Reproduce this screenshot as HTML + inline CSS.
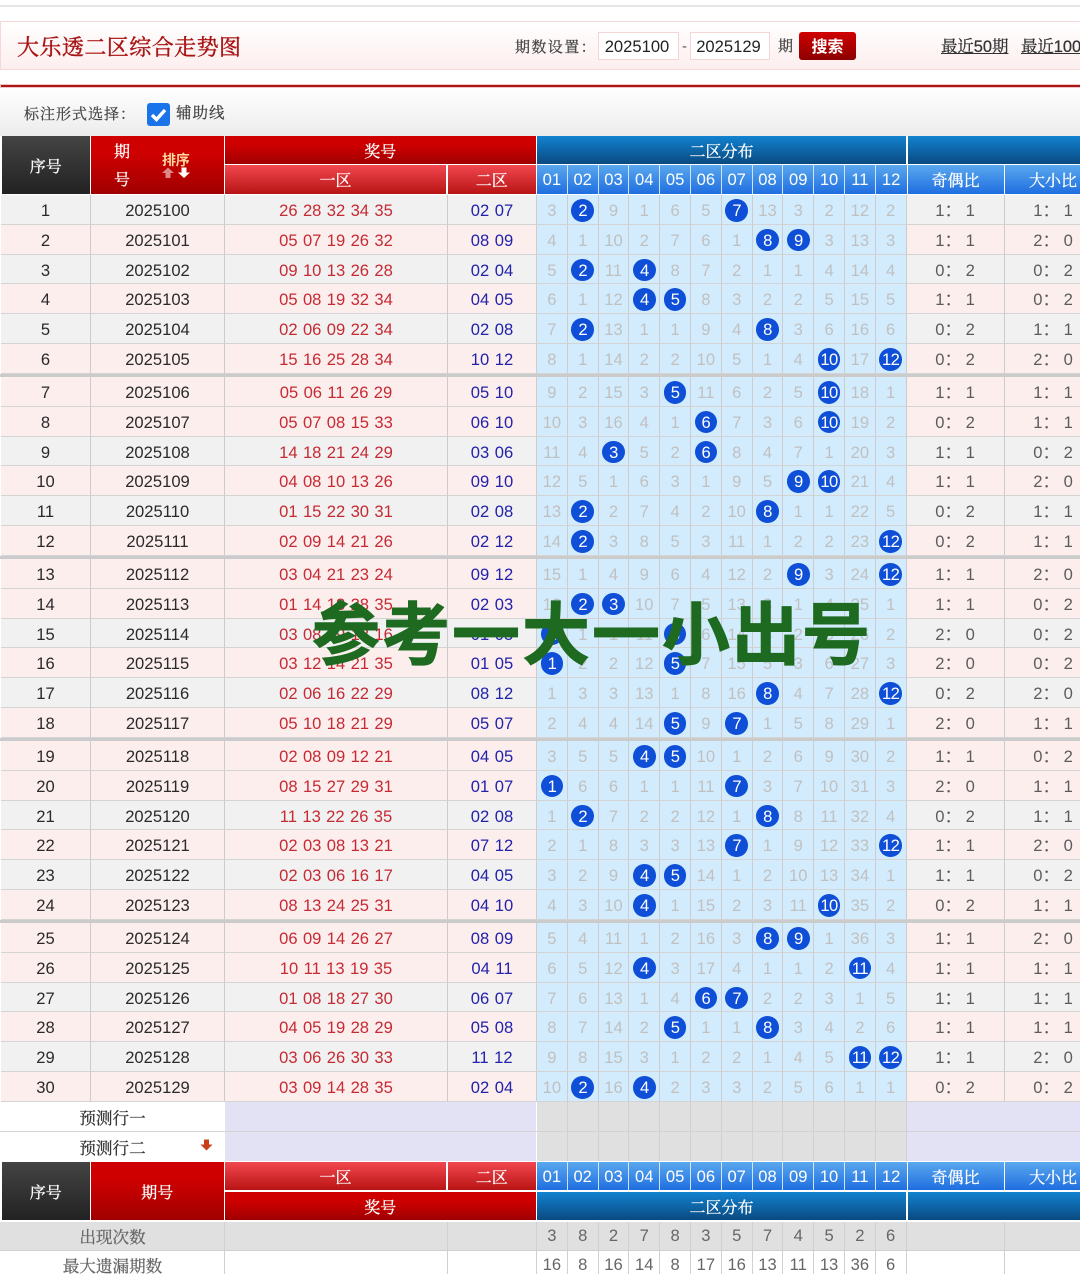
<!DOCTYPE html>
<html lang="zh">
<head>
<meta charset="utf-8">
<title>大乐透二区综合走势图</title>
<style>
html{margin:0;padding:0;background:#fff;width:1080px;height:1274px;overflow:hidden}
body{margin:0;padding:0;background:#fff;width:1080px;height:1274px;position:relative;overflow:hidden;font-family:"Liberation Sans","Noto Sans CJK SC",sans-serif;color:#222}
.a{position:absolute;display:block}
.se{font-family:"Liberation Sans","Noto Serif CJK SC",serif;-webkit-text-stroke:.25px currentColor}
.c{display:flex;align-items:center;justify-content:center;text-align:center;box-sizing:border-box}
.r{position:absolute;left:1px;height:29.8px;display:flex;width:1110px;font-size:16.6px;line-height:31px;background:#f1f1f1;color:#2a2a2a}
.r.p{background:#fdeeee}
.r span,.r i{display:block;box-sizing:border-box;border-right:1.2px solid #ccc;border-bottom:1.2px solid #d4d4d4;text-align:center;font-style:normal;height:100%}
.r span:nth-child(1){width:90px}
.r span:nth-child(2){width:134px}
.r span:nth-child(3){width:223px;color:#c62a33;word-spacing:.75px}
.r span:nth-child(4){width:89px;color:#2222aa;word-spacing:1px}
.r span:nth-child(n+5){width:98px;color:#5c5c5c}
.r i{width:30.8px;background:#d2ecfd;color:#c0c0c0;position:relative}
.r i b{position:absolute;left:3.6px;top:4px;width:22.6px;height:22.6px;border-radius:50%;background:#0f4fd8;color:#fff;font-weight:normal;line-height:23.6px;letter-spacing:-.6px}
.s{position:absolute;left:0;width:1080px;height:3.2px;background:#cbcbcb}
.hs{background:linear-gradient(#444,#222)}
.hr{background:linear-gradient(#cf0000 30%,#a00000)}
.hl{background:linear-gradient(#f2474f,#b81414)}
.hb{background:linear-gradient(#1282d0,#0a4a80)}
.hu{background:linear-gradient(#5aa8ee,#1f6ee0)}
.w{color:#fff;font-size:16px;font-family:"Liberation Sans","Noto Serif CJK SC",serif;-webkit-text-stroke:.3px #fff}
.f{position:absolute;left:537px;display:flex}
.f i{display:block;box-sizing:border-box;width:30.8px;height:100%;border-right:1.2px solid #d0d0d0;font-style:normal;text-align:center}
</style>
</head>
<body>
<!-- top -->
<div class="a" style="left:0;top:5px;width:1080px;height:1.5px;background:#e5e5e5"></div>

<!-- title bar -->
<div class="a" style="left:0;top:21px;width:1090px;height:49px;box-sizing:border-box;border:1.4px solid #f6d8d8;background:linear-gradient(#fff,#fdeeee)"></div>
<div class="a se" style="left:17px;top:32px;font-size:22px;line-height:32px;letter-spacing:.45px;color:#a81414;white-space:nowrap;-webkit-text-stroke:.4px #a81414">大乐透二区综合走势图</div>
<div class="a se" style="left:515px;top:38px;font-size:15px;line-height:20px;letter-spacing:1.4px;color:#444;white-space:nowrap">期数设置：</div>
<div class="a c" style="left:598px;top:32px;width:81px;height:28px;border:1.4px solid #f5d5d5;background:#fff;font-size:16.6px;color:#222;padding-right:3px;padding-top:1px">2025100</div>
<div class="a" style="left:682px;top:37px;font-size:15px;line-height:20px;color:#555">-</div>
<div class="a c" style="left:690px;top:32px;width:80px;height:28px;border:1.4px solid #f5d5d5;background:#fff;font-size:16.6px;color:#222;padding-right:3px;padding-top:1px">2025129</div>
<div class="a se" style="left:778px;top:37px;font-size:15px;line-height:20px;color:#444">期</div>
<div class="a c" style="left:799px;top:32px;width:57px;height:28px;border-radius:3px;background:linear-gradient(#d00000,#8c0000);color:#fff;font-size:16px;font-weight:bold;padding-bottom:2px">搜索</div>
<div class="a se" style="left:941px;top:37px;font-size:16.4px;line-height:20px;color:#333;text-decoration:underline;white-space:nowrap">最近50期</div>
<div class="a se" style="left:1021px;top:37px;font-size:16.4px;line-height:20px;color:#333;text-decoration:underline;white-space:nowrap">最近100期</div>

<!-- red line -->
<div class="a" style="left:0;top:84px;width:1080px;height:4px;background:#f3c4c4"></div>
<div class="a" style="left:1px;top:85px;width:1079px;height:2px;background:#a81a1a"></div>

<!-- options -->
<div class="a" style="left:0;top:88px;width:1080px;height:48px;background:linear-gradient(#fff,#ececec)"></div>
<div class="a se" style="left:24px;top:105px;font-size:15px;line-height:20px;letter-spacing:1px;color:#444;white-space:nowrap">标注形式选择：</div>
<div class="a" style="left:147px;top:103px;width:23px;height:23px;border-radius:3px;background:#1a73e8">
<svg width="23" height="23" viewBox="0 0 23 23"><path d="M5 12l4.5 4.5L18 7" fill="none" stroke="#fff" stroke-width="3.4"/></svg></div>
<div class="a se" style="left:176px;top:104px;font-size:15.5px;line-height:20px;letter-spacing:1px;color:#444;white-space:nowrap">辅助线</div>

<!-- header -->
<div class="a c hs w" style="left:2px;top:136px;width:87.5px;height:58px">序号</div>
<div class="a hr" style="left:91px;top:136px;width:132.5px;height:58px"></div>
<div class="a w" style="left:114px;top:143px;line-height:20px">期</div>
<div class="a w" style="left:114px;top:171px;line-height:20px">号</div>
<div class="a" style="left:162px;top:152px;font-size:14px;line-height:16px;font-weight:bold;color:#ffd9a0;letter-spacing:-.3px">排序</div>
<svg class="a" style="left:161px;top:167px" width="32" height="12" viewBox="0 0 32 12"><path d="M1 6L7 .5 13 6H9.5V11H4.5V6Z" fill="#d88"/><path d="M17 5.5H20.5V.5H25.5V5.5H29L23 11Z" fill="#fff"/></svg>
<div class="a c hr w" style="left:225px;top:136px;width:310.5px;height:28px">奖号</div>
<div class="a c hl w" style="left:225px;top:165px;width:221px;height:29px">一区</div>
<div class="a c hl w" style="left:448px;top:165px;width:87.5px;height:29px">二区</div>
<div class="a c hb w" style="left:537px;top:136px;width:369px;height:28px">二区分布</div>
<div class="a hb" style="left:907.5px;top:136px;width:173px;height:28px"></div>
<div class="a f hu" style="top:165px;height:29px;width:369.6px;color:#fff;font-size:16.6px;line-height:29px"><i style="border-color:#cfe4fa">01</i><i style="border-color:#cfe4fa">02</i><i style="border-color:#cfe4fa">03</i><i style="border-color:#cfe4fa">04</i><i style="border-color:#cfe4fa">05</i><i style="border-color:#cfe4fa">06</i><i style="border-color:#cfe4fa">07</i><i style="border-color:#cfe4fa">08</i><i style="border-color:#cfe4fa">09</i><i style="border-color:#cfe4fa">10</i><i style="border-color:#cfe4fa">11</i><i style="border:0">12</i></div>
<div class="a c hu w" style="left:907.5px;top:165px;width:96px;height:29px">奇偶比</div>
<div class="a c hu w" style="left:1005px;top:165px;width:96px;height:29px">大小比</div>

<!-- rows -->
<div class="r" style="top:195px"><span>1</span><span>2025100</span><span>26 28 32 34 35</span><span>02 07</span><i>3</i><i><b>2</b></i><i>9</i><i>1</i><i>6</i><i>5</i><i><b>7</b></i><i>13</i><i>3</i><i>2</i><i>12</i><i>2</i><span>1： 1</span><span>1： 1</span></div>
<div class="r p" style="top:224.8px"><span>2</span><span>2025101</span><span>05 07 19 26 32</span><span>08 09</span><i>4</i><i>1</i><i>10</i><i>2</i><i>7</i><i>6</i><i>1</i><i><b>8</b></i><i><b>9</b></i><i>3</i><i>13</i><i>3</i><span>1： 1</span><span>2： 0</span></div>
<div class="r" style="top:254.6px"><span>3</span><span>2025102</span><span>09 10 13 26 28</span><span>02 04</span><i>5</i><i><b>2</b></i><i>11</i><i><b>4</b></i><i>8</i><i>7</i><i>2</i><i>1</i><i>1</i><i>4</i><i>14</i><i>4</i><span>0： 2</span><span>0： 2</span></div>
<div class="r p" style="top:284.4px"><span>4</span><span>2025103</span><span>05 08 19 32 34</span><span>04 05</span><i>6</i><i>1</i><i>12</i><i><b>4</b></i><i><b>5</b></i><i>8</i><i>3</i><i>2</i><i>2</i><i>5</i><i>15</i><i>5</i><span>1： 1</span><span>0： 2</span></div>
<div class="r" style="top:314.2px"><span>5</span><span>2025104</span><span>02 06 09 22 34</span><span>02 08</span><i>7</i><i><b>2</b></i><i>13</i><i>1</i><i>1</i><i>9</i><i>4</i><i><b>8</b></i><i>3</i><i>6</i><i>16</i><i>6</i><span>0： 2</span><span>1： 1</span></div>
<div class="r p" style="top:344px"><span>6</span><span>2025105</span><span>15 16 25 28 34</span><span>10 12</span><i>8</i><i>1</i><i>14</i><i>2</i><i>2</i><i>10</i><i>5</i><i>1</i><i>4</i><i><b>10</b></i><i>17</i><i><b>12</b></i><span>0： 2</span><span>2： 0</span></div>
<div class="s" style="top:373.8px"></div>
<div class="r p" style="top:377px"><span>7</span><span>2025106</span><span>05 06 11 26 29</span><span>05 10</span><i>9</i><i>2</i><i>15</i><i>3</i><i><b>5</b></i><i>11</i><i>6</i><i>2</i><i>5</i><i><b>10</b></i><i>18</i><i>1</i><span>1： 1</span><span>1： 1</span></div>
<div class="r p" style="top:406.8px"><span>8</span><span>2025107</span><span>05 07 08 15 33</span><span>06 10</span><i>10</i><i>3</i><i>16</i><i>4</i><i>1</i><i><b>6</b></i><i>7</i><i>3</i><i>6</i><i><b>10</b></i><i>19</i><i>2</i><span>0： 2</span><span>1： 1</span></div>
<div class="r" style="top:436.6px"><span>9</span><span>2025108</span><span>14 18 21 24 29</span><span>03 06</span><i>11</i><i>4</i><i><b>3</b></i><i>5</i><i>2</i><i><b>6</b></i><i>8</i><i>4</i><i>7</i><i>1</i><i>20</i><i>3</i><span>1： 1</span><span>0： 2</span></div>
<div class="r p" style="top:466.4px"><span>10</span><span>2025109</span><span>04 08 10 13 26</span><span>09 10</span><i>12</i><i>5</i><i>1</i><i>6</i><i>3</i><i>1</i><i>9</i><i>5</i><i><b>9</b></i><i><b>10</b></i><i>21</i><i>4</i><span>1： 1</span><span>2： 0</span></div>
<div class="r" style="top:496.2px"><span>11</span><span>2025110</span><span>01 15 22 30 31</span><span>02 08</span><i>13</i><i><b>2</b></i><i>2</i><i>7</i><i>4</i><i>2</i><i>10</i><i><b>8</b></i><i>1</i><i>1</i><i>22</i><i>5</i><span>0： 2</span><span>1： 1</span></div>
<div class="r p" style="top:526px"><span>12</span><span>2025111</span><span>02 09 14 21 26</span><span>02 12</span><i>14</i><i><b>2</b></i><i>3</i><i>8</i><i>5</i><i>3</i><i>11</i><i>1</i><i>2</i><i>2</i><i>23</i><i><b>12</b></i><span>0： 2</span><span>1： 1</span></div>
<div class="s" style="top:555.8px"></div>
<div class="r p" style="top:559px"><span>13</span><span>2025112</span><span>03 04 21 23 24</span><span>09 12</span><i>15</i><i>1</i><i>4</i><i>9</i><i>6</i><i>4</i><i>12</i><i>2</i><i><b>9</b></i><i>3</i><i>24</i><i><b>12</b></i><span>1： 1</span><span>2： 0</span></div>
<div class="r p" style="top:588.8px"><span>14</span><span>2025113</span><span>01 14 18 28 35</span><span>02 03</span><i>16</i><i><b>2</b></i><i><b>3</b></i><i>10</i><i>7</i><i>5</i><i>13</i><i>3</i><i>1</i><i>4</i><i>25</i><i>1</i><span>1： 1</span><span>0： 2</span></div>
<div class="r" style="top:618.6px"><span>15</span><span>2025114</span><span>03 08 09 12 16</span><span>01 05</span><i><b>1</b></i><i>1</i><i>1</i><i>11</i><i><b>5</b></i><i>6</i><i>14</i><i>4</i><i>2</i><i>5</i><i>26</i><i>2</i><span>2： 0</span><span>0： 2</span></div>
<div class="r p" style="top:648.4px"><span>16</span><span>2025115</span><span>03 12 14 21 35</span><span>01 05</span><i><b>1</b></i><i>2</i><i>2</i><i>12</i><i><b>5</b></i><i>7</i><i>15</i><i>5</i><i>3</i><i>6</i><i>27</i><i>3</i><span>2： 0</span><span>0： 2</span></div>
<div class="r" style="top:678.2px"><span>17</span><span>2025116</span><span>02 06 16 22 29</span><span>08 12</span><i>1</i><i>3</i><i>3</i><i>13</i><i>1</i><i>8</i><i>16</i><i><b>8</b></i><i>4</i><i>7</i><i>28</i><i><b>12</b></i><span>0： 2</span><span>2： 0</span></div>
<div class="r p" style="top:708px"><span>18</span><span>2025117</span><span>05 10 18 21 29</span><span>05 07</span><i>2</i><i>4</i><i>4</i><i>14</i><i><b>5</b></i><i>9</i><i><b>7</b></i><i>1</i><i>5</i><i>8</i><i>29</i><i>1</i><span>2： 0</span><span>1： 1</span></div>
<div class="s" style="top:737.8px"></div>
<div class="r p" style="top:741px"><span>19</span><span>2025118</span><span>02 08 09 12 21</span><span>04 05</span><i>3</i><i>5</i><i>5</i><i><b>4</b></i><i><b>5</b></i><i>10</i><i>1</i><i>2</i><i>6</i><i>9</i><i>30</i><i>2</i><span>1： 1</span><span>0： 2</span></div>
<div class="r p" style="top:770.8px"><span>20</span><span>2025119</span><span>08 15 27 29 31</span><span>01 07</span><i><b>1</b></i><i>6</i><i>6</i><i>1</i><i>1</i><i>11</i><i><b>7</b></i><i>3</i><i>7</i><i>10</i><i>31</i><i>3</i><span>2： 0</span><span>1： 1</span></div>
<div class="r" style="top:800.6px"><span>21</span><span>2025120</span><span>11 13 22 26 35</span><span>02 08</span><i>1</i><i><b>2</b></i><i>7</i><i>2</i><i>2</i><i>12</i><i>1</i><i><b>8</b></i><i>8</i><i>11</i><i>32</i><i>4</i><span>0： 2</span><span>1： 1</span></div>
<div class="r p" style="top:830.4px"><span>22</span><span>2025121</span><span>02 03 08 13 21</span><span>07 12</span><i>2</i><i>1</i><i>8</i><i>3</i><i>3</i><i>13</i><i><b>7</b></i><i>1</i><i>9</i><i>12</i><i>33</i><i><b>12</b></i><span>1： 1</span><span>2： 0</span></div>
<div class="r" style="top:860.2px"><span>23</span><span>2025122</span><span>02 03 06 16 17</span><span>04 05</span><i>3</i><i>2</i><i>9</i><i><b>4</b></i><i><b>5</b></i><i>14</i><i>1</i><i>2</i><i>10</i><i>13</i><i>34</i><i>1</i><span>1： 1</span><span>0： 2</span></div>
<div class="r p" style="top:890px"><span>24</span><span>2025123</span><span>08 13 24 25 31</span><span>04 10</span><i>4</i><i>3</i><i>10</i><i><b>4</b></i><i>1</i><i>15</i><i>2</i><i>3</i><i>11</i><i><b>10</b></i><i>35</i><i>2</i><span>0： 2</span><span>1： 1</span></div>
<div class="s" style="top:919.8px"></div>
<div class="r p" style="top:923px"><span>25</span><span>2025124</span><span>06 09 14 26 27</span><span>08 09</span><i>5</i><i>4</i><i>11</i><i>1</i><i>2</i><i>16</i><i>3</i><i><b>8</b></i><i><b>9</b></i><i>1</i><i>36</i><i>3</i><span>1： 1</span><span>2： 0</span></div>
<div class="r p" style="top:952.8px"><span>26</span><span>2025125</span><span>10 11 13 19 35</span><span>04 11</span><i>6</i><i>5</i><i>12</i><i><b>4</b></i><i>3</i><i>17</i><i>4</i><i>1</i><i>1</i><i>2</i><i><b>11</b></i><i>4</i><span>1： 1</span><span>1： 1</span></div>
<div class="r" style="top:982.6px"><span>27</span><span>2025126</span><span>01 08 18 27 30</span><span>06 07</span><i>7</i><i>6</i><i>13</i><i>1</i><i>4</i><i><b>6</b></i><i><b>7</b></i><i>2</i><i>2</i><i>3</i><i>1</i><i>5</i><span>1： 1</span><span>1： 1</span></div>
<div class="r p" style="top:1012.4px"><span>28</span><span>2025127</span><span>04 05 19 28 29</span><span>05 08</span><i>8</i><i>7</i><i>14</i><i>2</i><i><b>5</b></i><i>1</i><i>1</i><i><b>8</b></i><i>3</i><i>4</i><i>2</i><i>6</i><span>1： 1</span><span>1： 1</span></div>
<div class="r" style="top:1042.2px"><span>29</span><span>2025128</span><span>03 06 26 30 33</span><span>11 12</span><i>9</i><i>8</i><i>15</i><i>3</i><i>1</i><i>2</i><i>2</i><i>1</i><i>4</i><i>5</i><i><b>11</b></i><i><b>12</b></i><span>1： 1</span><span>2： 0</span></div>
<div class="r p" style="top:1072px"><span>30</span><span>2025129</span><span>03 09 14 28 35</span><span>02 04</span><i>10</i><i><b>2</b></i><i>16</i><i><b>4</b></i><i>2</i><i>3</i><i>3</i><i>2</i><i>5</i><i>6</i><i>1</i><i>1</i><span>0： 2</span><span>0： 2</span></div>

<!-- prediction rows -->
<div class="a c se" style="left:0;top:1102px;width:225px;height:29px;font-size:16.6px;color:#333">预测行一</div>
<div class="a c se" style="left:0;top:1132px;width:225px;height:29px;font-size:16.6px;color:#333">预测行二</div>
<svg class="a" style="left:200px;top:1139px" width="13" height="12" viewBox="0 0 13 12"><path d="M.5 5.5H4V.5H9V5.5H12.5L6.5 11.5Z" fill="#c8401a"/></svg>
<div class="a" style="left:225px;top:1102px;width:311px;height:29px;background:#e2e2f4"></div>
<div class="a" style="left:225px;top:1132px;width:311px;height:29px;background:#e2e2f4"></div>
<div class="a" style="left:907px;top:1102px;width:173px;height:29px;background:#e2e2f4"></div>
<div class="a" style="left:907px;top:1132px;width:173px;height:29px;background:#e2e2f4"></div>
<div class="f" style="top:1102px;height:29px;width:369.6px;background:#e0e0e0"><i></i><i></i><i></i><i></i><i></i><i></i><i></i><i></i><i></i><i></i><i></i><i></i></div>
<div class="f" style="top:1132px;height:29px;width:369.6px;background:#e0e0e0"><i></i><i></i><i></i><i></i><i></i><i></i><i></i><i></i><i></i><i></i><i></i><i></i></div>
<div class="a" style="left:0;top:1131px;width:1080px;height:1px;background:#d2d2d2"></div>

<!-- footer header -->
<div class="a c hs w" style="left:2px;top:1162px;width:87.5px;height:58px">序号</div>
<div class="a c hr w" style="left:91px;top:1162px;width:132.5px;height:58px">期号</div>
<div class="a c hl w" style="left:225px;top:1162px;width:221px;height:28px">一区</div>
<div class="a c hl w" style="left:448px;top:1162px;width:87.5px;height:28px">二区</div>
<div class="a c hr w" style="left:225px;top:1192px;width:310.5px;height:28px">奖号</div>
<div class="a f hu" style="top:1162px;height:28px;width:369.6px;color:#fff;font-size:16.6px;line-height:30px"><i style="border-color:#cfe4fa">01</i><i style="border-color:#cfe4fa">02</i><i style="border-color:#cfe4fa">03</i><i style="border-color:#cfe4fa">04</i><i style="border-color:#cfe4fa">05</i><i style="border-color:#cfe4fa">06</i><i style="border-color:#cfe4fa">07</i><i style="border-color:#cfe4fa">08</i><i style="border-color:#cfe4fa">09</i><i style="border-color:#cfe4fa">10</i><i style="border-color:#cfe4fa">11</i><i style="border:0">12</i></div>
<div class="a c hu w" style="left:907.5px;top:1162px;width:96px;height:28px">奇偶比</div>
<div class="a c hu w" style="left:1005px;top:1162px;width:96px;height:28px">大小比</div>
<div class="a c hb w" style="left:537px;top:1192px;width:369px;height:28px">二区分布</div>
<div class="a hb" style="left:907.5px;top:1192px;width:173px;height:28px"></div>

<!-- stats -->
<div class="a" style="left:0;top:1222px;width:1080px;height:28px;background:#e0e0e0"></div>
<div class="a" style="left:0;top:1250px;width:1080px;height:1px;background:#d0d0d0"></div>
<div class="a c se" style="left:0;top:1222px;width:225px;height:28px;font-size:16.6px;color:#666">出现次数</div>
<div class="a c se" style="left:0;top:1251px;width:225px;height:28px;font-size:16.6px;color:#666">最大遗漏期数</div>
<div class="a" style="left:224px;top:1222px;width:1px;height:52px;background:#d0d0d0"></div>
<div class="a" style="left:447px;top:1222px;width:1px;height:52px;background:#d0d0d0"></div>
<div class="a" style="left:536px;top:1222px;width:1px;height:52px;background:#d0d0d0"></div>
<div class="a" style="left:1004px;top:1222px;width:1px;height:52px;background:#d0d0d0"></div>
<div class="f" style="top:1222px;height:28px;width:369.6px;color:#666;font-size:16.6px;line-height:28px"><i>3</i><i>8</i><i>2</i><i>7</i><i>8</i><i>3</i><i>5</i><i>7</i><i>4</i><i>5</i><i>2</i><i>6</i></div>
<div class="f" style="top:1251px;height:23px;width:369.6px;color:#666;font-size:16.6px;line-height:28px"><i>16</i><i>8</i><i>16</i><i>14</i><i>8</i><i>17</i><i>16</i><i>13</i><i>11</i><i>13</i><i>36</i><i>6</i></div>

<!-- watermark -->
<div class="a" style="left:312px;top:588px;font-family:'Noto Sans CJK SC',sans-serif;font-weight:700;font-size:68px;line-height:84px;letter-spacing:2px;color:#1d6a20;white-space:nowrap;-webkit-text-stroke:1px #1d6a20">参考一大一小出号</div>
</body>
</html>
